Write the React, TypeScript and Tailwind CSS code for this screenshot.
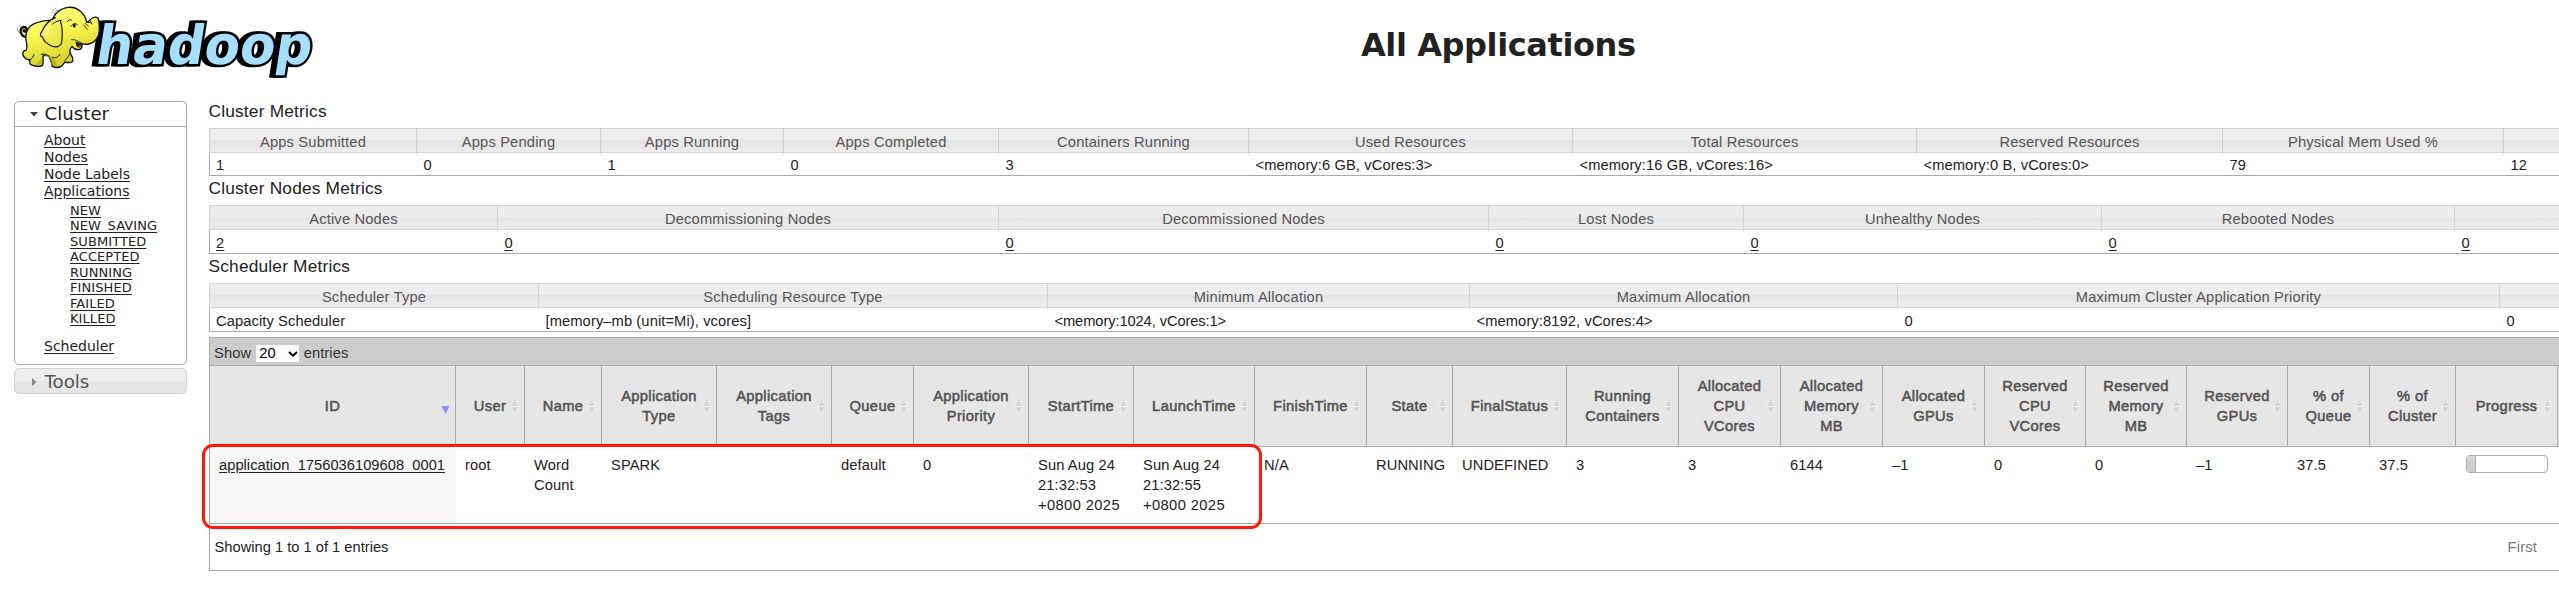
import type { ReactNode } from "react";

type Metric = { label: string; value: string; tight?: boolean };

const clusterMetrics: Metric[] = [
  { label: "Apps Submitted", value: "1" },
  { label: "Apps Pending", value: "0" },
  { label: "Apps Running", value: "1" },
  { label: "Apps Completed", value: "0" },
  { label: "Containers Running", value: "3" },
  { label: "Used Resources", value: "<memory:6 GB, vCores:3>" },
  { label: "Total Resources", value: "<memory:16 GB, vCores:16>" },
  { label: "Reserved Resources", value: "<memory:0 B, vCores:0>" },
  { label: "Physical Mem Used %", value: "79" },
  { label: "", value: "12" },
];

const nodeMetrics: Metric[] = [
  { label: "Active Nodes", value: "2" },
  { label: "Decommissioning Nodes", value: "0" },
  { label: "Decommissioned Nodes", value: "0" },
  { label: "Lost Nodes", value: "0" },
  { label: "Unhealthy Nodes", value: "0" },
  { label: "Rebooted Nodes", value: "0" },
  { label: "", value: "0" },
];

const schedulerMetrics: Metric[] = [
  { label: "Scheduler Type", value: "Capacity Scheduler" },
  { label: "Scheduling Resource Type", value: "[memory–mb (unit=Mi), vcores]" },
  { label: "Minimum Allocation", value: "<memory:1024, vCores:1>", tight: true },
  { label: "Maximum Allocation", value: "<memory:8192, vCores:4>" },
  { label: "Maximum Cluster Application Priority", value: "0" },
  { label: "", value: "0" },
];

const appColumns: { label: string; width: number; value: ReactNode }[] = [
  { label: "ID", width: 246, value: <a className="underline underline-offset-2 tracking-[0.02px]">application_1756036109608_0001</a> },
  { label: "User", width: 69, value: "root" },
  { label: "Name", width: 77, value: "Word Count" },
  { label: "Application Type", width: 115, value: "SPARK" },
  { label: "Application Tags", width: 115, value: "" },
  { label: "Queue", width: 82, value: "default" },
  { label: "Application Priority", width: 115, value: "0" },
  { label: "StartTime", width: 105, value: <>Sun Aug 24<br />21:32:53<br /><span className="tracking-[0.4px]">+0800 2025</span></> },
  { label: "LaunchTime", width: 121, value: <>Sun Aug 24<br />21:32:55<br /><span className="tracking-[0.4px]">+0800 2025</span></> },
  { label: "FinishTime", width: 112, value: "N/A" },
  { label: "State", width: 86, value: "RUNNING" },
  { label: "FinalStatus", width: 114, value: "UNDEFINED" },
  { label: "Running Containers", width: 112, value: "3" },
  { label: "Allocated CPU VCores", width: 102, value: "3" },
  { label: "Allocated Memory MB", width: 102, value: "6144" },
  { label: "Allocated GPUs", width: 102, value: "–1" },
  { label: "Reserved CPU VCores", width: 101, value: "0" },
  { label: "Reserved Memory MB", width: 101, value: "0" },
  { label: "Reserved GPUs", width: 101, value: "–1" },
  { label: "% of Queue", width: 82, value: "37.5" },
  { label: "% of Cluster", width: 86, value: "37.5" },
  {
    label: "Progress",
    width: 102,
    value: (
      <div className="flex h-[18px] w-[82px] overflow-hidden rounded-[4px] border border-[#aaaaaa] bg-white">
        <div className="w-[9px] border-r border-[#aaaaaa] bg-linear-to-b from-[#dadada] to-[#c8c8c8]" />
      </div>
    ),
  },
];

const appStates = ["NEW", "NEW_SAVING", "SUBMITTED", "ACCEPTED", "RUNNING", "FINISHED", "FAILED", "KILLED"];

function Elephant() {
  return (
    <g transform="translate(10 0) scale(0.3333)" strokeLinecap="round" strokeLinejoin="round">
      <path d="M52 109C40 112 31 102 33 90C35 80 47 79 49 87C50 93 43 97 42 91" fill="none" stroke="#111" strokeWidth="9" />
      <path d="M52 107C41 108 36 101 37 92C38 85 44 84 46 88" fill="none" stroke="#f3ee4e" strokeWidth="3" />
      <path d="M21 92C21 84 25 80 30 78M27 100C26 97 26 94 27 92M127 38C128 31 132 27 138 25M132 43C134 36 138 32 144 30" fill="none" stroke="#777" strokeWidth="2" />
      <path
        d="M128 62C131 43 150 24 176 22C204 20 226 42 230 67C236 68 240 57 247 54C254 50 262 50 265 56C268 64 268 78 268 92C267 112 255 128 236 132C228 134 220 132 216 131C218 141 214 150 204 149C196 149 190 145 186 139C180 146 178 152 181 160C186 168 190 177 188 184C183 190 172 188 165 186C161 192 155 199 151 201C143 203 133 203 127 199C126 187 121 177 117 169C110 165 104 166 99 168C99 178 101 187 98 196C87 202 74 199 64 195C57 192 59 185 60 179C50 181 41 173 38 162C39 154 42 151 48 151C54 143 50 132 48 121C45 95 57 77 78 69C95 62 112 60 128 62Z"
        fill="url(#hide)"
        stroke="#111"
        strokeWidth="4"
      />
      <path d="M60 179C66 177 70 171 72 164M117 169C110 162 102 162 94 163M181 158C178 166 172 174 165 181M126 172C136 176 145 171 150 163" fill="none" stroke="#111" strokeWidth="3" />
      <path d="M103 166C108 169 113 170 117 172L126 196L143 199C138 187 133 180 130 173C118 167 108 163 103 166ZM76 194C86 197 94 195 96 191L97 172C90 180 86 188 76 194Z" fill="#a8a51c" opacity=".65" />
      <path d="M136 53C121 59 104 75 96 94C88 104 90 109 98 111C99 122 114 133 127 139C140 144 153 138 155 128C157 112 160 86 151 62" fill="url(#ear)" stroke="#111" strokeWidth="3.5" />
      <path d="M103 103C105 91 110 82 116 78L118 96C114 104 108 107 103 103Z" fill="#fbf97f" />
      <path d="M128 72C136 65 146 61 154 61M172 65C175 60 180 58 184 60" fill="none" stroke="#111" strokeWidth="3" />
      <path d="M184 78C188 70 198 68 203 75" fill="none" stroke="#111" strokeWidth="3" />
      <ellipse cx="193" cy="77" rx="4" ry="6" fill="#111" />
      <path d="M225 70L235 78M221 75L232 88M232 66L244 69M240 62L246 72M185 119C196 117 203 124 216 130" fill="none" stroke="#111" strokeWidth="2.5" />
      <path d="M197 124C197 137 203 144 211 142C216 139 215 132 213 129C207 129 202 127 197 124Z" fill="#111" />
      <path d="M204 142C206 136 211 136 213 138C211 144 207 145 204 142Z" fill="#d8462c" />
    </g>
  );
}

function HadoopLogo() {
  return (
    <svg className="block h-20 w-[330px] shrink-0" viewBox="0 0 330 80" aria-label="hadoop">
      <defs>
        <linearGradient id="hide" x1="0" y1="0" x2="0.35" y2="1">
          <stop offset="0" stopColor="#fffd9c" />
          <stop offset="0.5" stopColor="#faf551" />
          <stop offset="1" stopColor="#d3ce2c" />
        </linearGradient>
        <linearGradient id="ear" x1="0" y1="0" x2="1" y2="1">
          <stop offset="0" stopColor="#fdf974" />
          <stop offset="1" stopColor="#e6e13c" />
        </linearGradient>
      </defs>
      <g transform="translate(94 63.5) skewX(-9)" fontFamily="DejaVu Sans, sans-serif" fontWeight="700" fontSize="54">
        <text x="-4" y="0" textLength="216" lengthAdjust="spacingAndGlyphs" fill="#000" stroke="#000" strokeWidth="5" strokeLinejoin="miter">hadoop</text>
        <text x="0" y="0" textLength="216" lengthAdjust="spacingAndGlyphs" fill="#000" stroke="#000" strokeWidth="5" strokeLinejoin="miter">hadoop</text>
        <text x="0" y="0" textLength="216" lengthAdjust="spacingAndGlyphs" fill="#a5deff">hadoop</text>
      </g>
      <Elephant />
    </svg>
  );
}

function Sidebar() {
  return (
    <nav className="ml-[14px] flex w-[173px] shrink-0 flex-col gap-[3px] font-['DejaVu_Sans',sans-serif] text-[#222222]">
      <section className="flex h-[264px] flex-col rounded-[5px] border border-[#aaaaaa] bg-white">
        <h3 className="flex h-[25px] shrink-0 items-center border-b border-[#aaaaaa] pl-[15px] text-[18.2px] leading-[24px]">
          <svg className="mr-[6.5px] h-[5px] w-[8px]" viewBox="0 0 8 5"><path d="M0 0H8L4 4.5Z" fill="#454545" /></svg>
          Cluster
        </h3>
        <ul className="pt-[5px] pl-[29px] text-[14px] leading-[17px]">
          {["About", "Nodes", "Node Labels", "Applications"].map((item) => (
            <li key={item}><a className="underline underline-offset-2">{item}</a></li>
          ))}
          <li>
            <ul className="pt-[2.5px] pl-[26px] text-[13px] leading-[15.5px]">
              {appStates.map((item) => (
                <li key={item}><a className="underline underline-offset-2 tracking-[0.08px]">{item}</a></li>
              ))}
            </ul>
          </li>
          <li className="pt-[11px]"><a className="underline underline-offset-2">Scheduler</a></li>
        </ul>
      </section>
      <h3 className="flex h-[26px] items-center rounded-[5px] border border-[#d3d3d3] bg-linear-to-b from-[#ededed] from-50% to-[#e5e5e5] to-50% pt-[1px] pl-[17px] text-[18.2px] leading-[24px] text-[#555555]">
        <svg className="mr-[7.5px] h-[8px] w-[5px]" viewBox="0 0 5 8"><path d="M0 0V8L4.5 4Z" fill="#888888" /></svg>
        Tools
      </h3>
    </nav>
  );
}

function MetricsTable({ metrics, columns, row, links = false }: { metrics: Metric[]; columns: string; row: string; links?: boolean }) {
  return (
    <div>
      <div className={`grid h-[25px] border-y border-[#d3d3d3] bg-linear-to-b from-[#ededed] from-45% via-[#e5e5e5] via-50% to-[#ececec] ${columns}`}>
        {metrics.map((m, i) => (
          <div key={i} className="border-l border-[#d3d3d3] pt-[2px] text-center leading-[23px] tracking-[0.17px] text-[#555555]">{m.label}</div>
        ))}
      </div>
      <div className={`grid border-b border-l border-[#aaaaaa] bg-white ${row} ${columns}`}>
        {metrics.map((m, i) => (
          <div key={i} className={m.tight ? "pl-[6.5px] tracking-[-0.1px]" : "pl-[6.5px] tracking-[0.1px] first:pl-[6px]"}>
            {links ? <a className="underline underline-offset-2">{m.value}</a> : m.value}
          </div>
        ))}
      </div>
    </div>
  );
}

function SortIcon({ active }: { active: boolean }) {
  if (active) {
    return (
      <svg className="absolute right-[5px] bottom-[32px] h-[8px] w-[9px]" viewBox="0 0 9 8"><path d="M0.5 0H8.5L4.5 8Z" fill="#8b93ff" /></svg>
    );
  }
  return (
    <svg className="absolute right-[5px] top-[32px] h-[17px] w-[9px]" viewBox="0 0 9 17">
      <path d="M4.5 1L8.5 8.5L4.5 16L0.5 8.5Z" fill="#d6d6d6" stroke="#ffffff" strokeWidth="0.8" strokeDasharray="1.2 0.8" />
      <path d="M1 8.5H8" stroke="#f4f4f4" strokeWidth="1" />
    </svg>
  );
}

function ApplicationsTable() {
  const cols = appColumns.map((c) => `${c.width}px`).join(" ") + " 60px";
  return (
    <div className="relative mt-[5px] h-[234px] border border-[#aaaaaa]">
      <div className="flex h-[28px] items-start border-b border-[#aaaaaa] bg-[#cccccc] pl-[4px] leading-[31px] tracking-[0.1px] text-[#333333]">
        <span>Show</span>
        <span className="mt-[7px] ml-[5px] flex h-[17px] w-[43px] items-center bg-white pl-[3px] text-[14.7px] leading-[17px] text-black">
          20
          <svg className="ml-[12px] h-[6px] w-[10px]" viewBox="0 0 10 6"><path d="M1 1L5 4.8L9 1" fill="none" stroke="#000" strokeWidth="1.9" /></svg>
        </span>
        <span className="ml-[4.5px]">entries</span>
      </div>
      <div className="grid h-[81px] border-b border-[#aaaaaa] bg-[#e6e6e6]" style={{ gridTemplateColumns: cols }}>
        {appColumns.map((c, i) => (
          <div key={i} className="relative flex items-center justify-center border-r border-[#aaaaaa] px-[18px] text-center leading-[20px] tracking-[0.35px] text-[#555555] [-webkit-text-stroke:0.55px_#555555]">
            <span className="w-min">{c.label}</span>
            <SortIcon active={i === 0} />
          </div>
        ))}
      </div>
      <div className="grid h-[77px] border-b border-[#aaaaaa] bg-white" style={{ gridTemplateColumns: cols }}>
        {appColumns.map((c, i) => (
          <div key={i} className="pt-[8px] pl-[9px] leading-[20px] tracking-[0.1px] first:bg-[#f7f7f7] last:pl-[10px]">{c.value}</div>
        ))}
      </div>
      <div className="flex h-[46px] leading-[46px]">
        <span className="w-[2297.5px] pl-[4.5px]">Showing 1 to 1 of 1 entries</span>
        <span className="text-[#777777] tracking-[0.2px]">First</span>
      </div>
      <div className="absolute top-[106px] left-[-8px] h-[85px] w-[1060px] rounded-[11px] border-3 border-[#ff1708]" />
    </div>
  );
}

export default function App() {
  return (
    <div className="h-[595px] w-full overflow-hidden bg-white font-['Liberation_Sans',Arial,sans-serif] text-[14.7px] text-[#222222]">
      <header className="flex h-[101px]">
        <HadoopLogo />
        <h1 className="ml-[1031px] pt-[25px] font-['DejaVu_Sans',sans-serif] text-[32px] leading-[40px] font-bold tracking-[-0.4px]">All Applications</h1>
      </header>
      <div className="flex">
        <Sidebar />
        <main className="ml-[22px] w-[2600px] shrink-0">
          <h2 className="-ml-[0.5px] h-[27px] text-[17.3px] leading-[20px] tracking-[0.2px]">Cluster Metrics</h2>
          <MetricsTable
            metrics={clusterMetrics}
            columns="grid-cols-[207px_184px_183px_215px_250px_324px_344px_306px_281px_1fr]"
            row="h-[23px] leading-[25px]"
          />
          <h2 className="-ml-[0.5px] h-[29px] pt-[2px] text-[17.3px] leading-[20px] tracking-[0.2px]">Cluster Nodes Metrics</h2>
          <MetricsTable
            metrics={nodeMetrics}
            columns="grid-cols-[288px_501px_490px_255px_358px_353px_1fr]"
            row="h-[24px] leading-[26px]"
            links
          />
          <h2 className="-ml-[0.5px] h-[29px] pt-[2px] text-[17.3px] leading-[20px] tracking-[0.2px]">Scheduler Metrics</h2>
          <MetricsTable
            metrics={schedulerMetrics}
            columns="grid-cols-[329px_509px_422px_428px_602px_1fr]"
            row="h-[24px] leading-[26px]"
          />
          <ApplicationsTable />
        </main>
      </div>
    </div>
  );
}
